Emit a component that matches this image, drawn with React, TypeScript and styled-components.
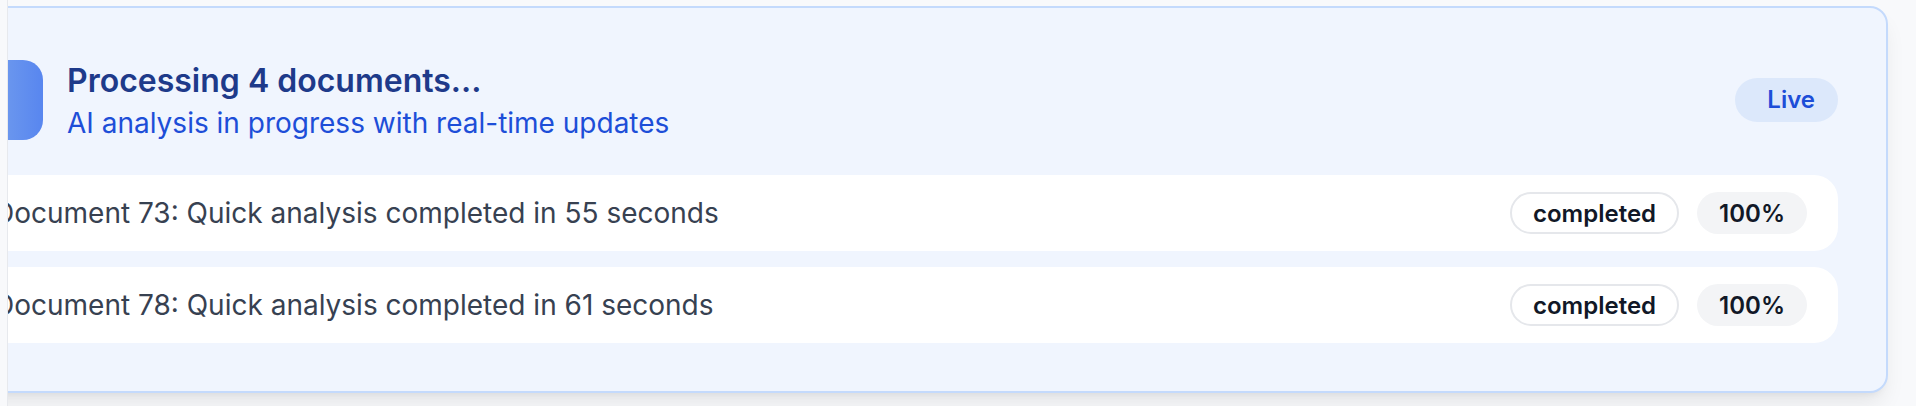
import React from "react";
import styled, { createGlobalStyle } from "styled-components";

const Global = createGlobalStyle`
  html, body { margin: 0; padding: 0; }
  body {
    background: #f8f9fb;
    font-family: Inter, "Noto Sans", sans-serif;
    -webkit-font-smoothing: antialiased;
  }
`;

const Viewport = styled.div`
  margin-left: 7px;
  border-left: 1px solid #e7e9ed;
  height: 406px;
  overflow: hidden;
  padding-top: 6px;
  box-sizing: border-box;
`;

const Card = styled.section`
  margin-left: -95px;
  margin-right: 28px;
  box-sizing: border-box;
  height: 387px;
  padding: 48px;
  border: 2px solid #c4dafc;
  border-radius: 18px;
  background: #f0f5fe;
  box-shadow: 0 14px 22px -4px rgba(0, 0, 0, 0.08), 0 6px 9px -6px rgba(0, 0, 0, 0.08);
  display: flex;
  flex-direction: column;
  gap: 32px;
`;

const Header = styled.header`
  height: 88px;
  display: flex;
  align-items: center;
  justify-content: space-between;
`;

const HeaderLeft = styled.div`
  display: flex;
  align-items: center;
  gap: 24px;
`;

const IconTile = styled.div`
  width: 80px;
  height: 80px;
  border-radius: 20px;
  background: linear-gradient(90deg, #82a8f3 0%, #6a96ee 55%, #5886ef 100%);
  flex-shrink: 0;
`;

const TitleBlock = styled.div`
  display: flex;
  flex-direction: column;
  gap: 2px;
  padding-top: 4px;
`;

const Title = styled.h2`
  margin: 0;
  font-size: 32px;
  line-height: 40px;
  font-weight: 600;
  color: #1e3a8a;
`;

const Subtitle = styled.p`
  margin: 0;
  font-size: 28px;
  line-height: 40px;
  font-weight: 400;
  color: #1d4ed8;
`;

const LiveBadge = styled.span`
  height: 44px;
  box-sizing: border-box;
  padding: 0 23px 0 32px;
  border-radius: 999px;
  background: #dce8fb;
  color: #1d4ed8;
  font-size: 24px;
  font-weight: 600;
  display: inline-flex;
  align-items: center;
`;

const List = styled.div`
  display: flex;
  flex-direction: column;
  gap: 16px;
`;

const Row = styled.div`
  height: 76px;
  box-sizing: border-box;
  padding: 0 31px;
  background: #ffffff;
  border-radius: 24px;
  display: flex;
  align-items: center;
  justify-content: space-between;
`;

const RowText = styled.span`
  font-size: 28px;
  line-height: 40px;
  color: #374151;
  white-space: nowrap;
`;

const Pills = styled.div`
  display: flex;
  align-items: center;
  gap: 18px;
`;

const Pill = styled.span<{ $variant: "outline" | "muted" }>`
  height: 42px;
  box-sizing: border-box;
  padding: 0 ${(p) => (p.$variant === "outline" ? "21px" : "20px")};
  border-radius: 999px;
  border: 2px solid ${(p) => (p.$variant === "outline" ? "#e5e7eb" : "transparent")};
  background: ${(p) => (p.$variant === "outline" ? "#ffffff" : "#f3f4f6")};
  color: #111827;
  font-size: 24px;
  font-weight: 600;
  display: inline-flex;
  align-items: center;
`;

const items = [
  { id: 73, secs: 55 },
  { id: 78, secs: 61 },
];

export default function App() {
  return (
    <>
      <Global />
      <Viewport>
        <Card>
          <Header>
            <HeaderLeft>
              <IconTile />
              <TitleBlock>
                <Title>Processing 4 documents...</Title>
                <Subtitle>AI analysis in progress with real-time updates</Subtitle>
              </TitleBlock>
            </HeaderLeft>
            <LiveBadge>Live</LiveBadge>
          </Header>
          <List>
            {items.map((it) => (
              <Row key={it.id}>
                <RowText>
                  Document {it.id}: Quick analysis completed in {it.secs} seconds
                </RowText>
                <Pills>
                  <Pill $variant="outline">completed</Pill>
                  <Pill $variant="muted">100%</Pill>
                </Pills>
              </Row>
            ))}
          </List>
        </Card>
      </Viewport>
    </>
  );
}
